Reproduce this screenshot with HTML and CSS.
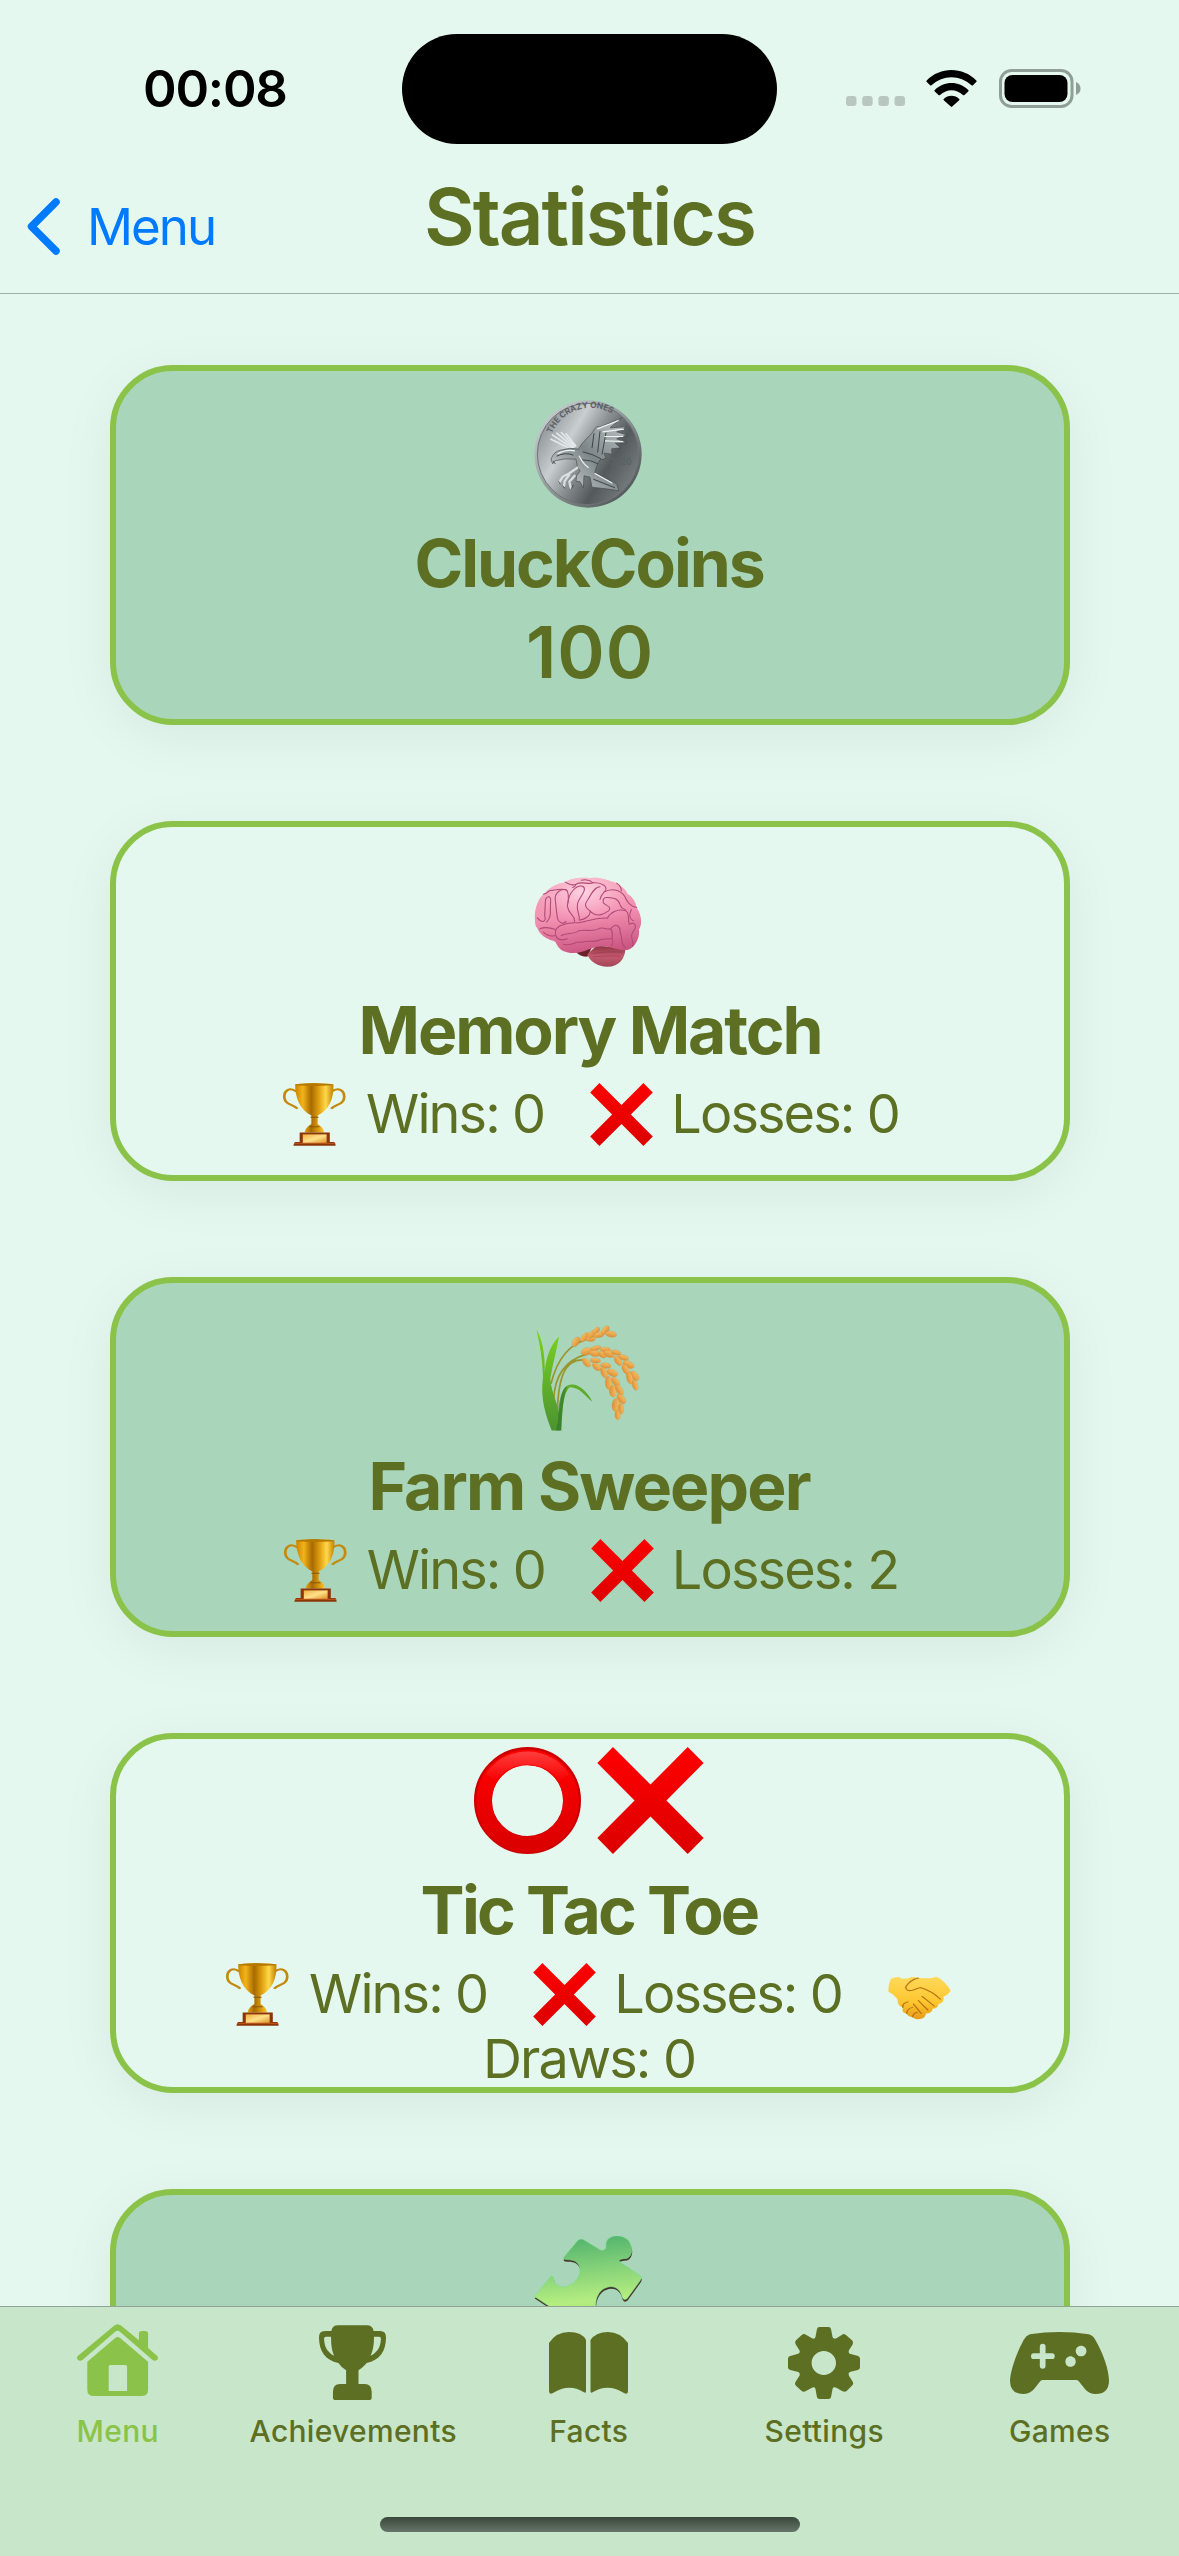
FILE: index.html
```
<!DOCTYPE html>
<html lang="en">
<head>
<meta charset="utf-8">
<title>Statistics</title>
<link rel="stylesheet" href="styles.css">
</head>
<body>
<svg class="defs" width="0" height="0" aria-hidden="true">
  <defs>
    <linearGradient id="red" x1="0" y1="0" x2="0" y2="1"><stop offset="0" stop-color="#ff0000"/><stop offset="1" stop-color="#dc0000"/></linearGradient>
    <linearGradient id="gold" x1="0" y1="0" x2="1" y2="0"><stop offset="0" stop-color="#c98500"/><stop offset=".2" stop-color="#f3b31a"/><stop offset=".42" stop-color="#a86a00"/><stop offset=".62" stop-color="#e0a010"/><stop offset=".8" stop-color="#ffd84a"/><stop offset="1" stop-color="#c08000"/></linearGradient>
    <linearGradient id="plate" x1="0" y1="0" x2="1" y2="1"><stop offset="0" stop-color="#f0b040"/><stop offset=".5" stop-color="#ffe08a"/><stop offset="1" stop-color="#dd9425"/></linearGradient>
    <symbol id="cross" viewBox="470 52 320 322">
      <path fill="url(#red)" d="M517 52 630 165 742 52 790 100 678 213 790 326 742 374 630 261 517 374 470 326 582 213 470 100Z"/>
    </symbol>
    <symbol id="trophy" viewBox="54 308 140 190" preserveAspectRatio="none">
      <path fill="none" stroke="#c48a0c" stroke-width="6" d="M84 334C68 318 56 332 57 352C59 376 78 372 86 386M162 334C178 318 191 332 190 352C188 376 169 372 161 386"/>
      <path fill="url(#gold)" d="M81 312Q123 306 166 312C167 350 160 386 131 406V432Q145 444 145 457H102Q103 444 117 432V406C90 388 81 350 81 312Z"/>
      <ellipse cx="123.500" cy="313" rx="42" ry="4" fill="#b67900"/>
      <path stroke="#8b5600" stroke-width="3" d="M115 411H133M113 440H135"/>
      <path fill="#8c3508" d="M91 457H158V486H168Q171 490 171 497H77Q78 489 81 486H91Z"/>
      <path fill="url(#plate)" d="M98 463H151V489H98Z"/>
      <path fill="#b4521a" d="M79 488H169L170 492H78Z"/>
    </symbol>
  </defs>
</svg>

<div class="screen">
  <header class="header">
    <div class="status">
      <span class="time">00:08</span>
      <span class="island"></span>
      <div class="signals">
        <svg class="cell" viewBox="0 0 59 10"><g fill="#b8c8c0"><rect width="10.500" height="10" rx="3"/><rect x="16.200" width="10.500" height="10" rx="3"/><rect x="32.400" width="10.500" height="10" rx="3"/><rect x="48.500" width="10.500" height="10" rx="3"/></g></svg>
        <svg class="wifi" viewBox="0 0 51 37"><path d="M.7 10.500C14-3.500 37-3.500 50.300 10.500Q51 11.300 50.200 12L47 15.300Q46.300 15.900 45.500 15.300C34 4.500 17 4.500 5.500 15.300Q4.700 15.900 4 15.300L.8 12Q0 11.300.7 10.500ZM8.800 20C18 10.700 33 10.700 42.200 20Q43 20.700 42.200 21.400L38.500 25Q37.800 25.700 37 25C30 18.600 21 18.600 14 25Q13.200 25.700 12.500 25L8.800 21.400Q8 20.700 8.800 20ZM17.800 28.900C22 24.600 29 24.600 33.200 28.900Q33.900 29.600 33.200 30.300L26.200 36.600Q25.500 37.200 24.800 36.600L17.800 30.300Q17.100 29.600 17.800 28.900Z"/></svg>
        <svg class="battery" viewBox="0 0 82 39"><rect x="1.500" y="1.500" width="71.500" height="36" rx="11" fill="none" stroke="#8f9f97" stroke-width="3"/><rect x="5.500" y="6" width="63" height="27" rx="8"/><path fill="#8f9f97" d="M77 13Q81.500 15 81.500 19.500T77 26Z"/></svg>
      </div>
    </div>
    <nav class="nav">
      <a class="back"><svg class="chevron" viewBox="0 0 33 57"><path fill="none" stroke="#007aff" stroke-width="7.500" stroke-linecap="round" stroke-linejoin="round" d="M29 4 4.500 28.500 29 53"/></svg><span>Menu</span></a>
      <h1 class="title">Statistics</h1>
    </nav>
  </header>

  <main class="list">
    <section class="card tinted coins">
      <svg class="emoji" viewBox="102 61 324 323">
        <defs>
          <linearGradient id="silver" x1="0" y1=".2" x2="1" y2=".8"><stop offset="0" stop-color="#848a8d"/><stop offset=".3" stop-color="#c9ced1"/><stop offset=".48" stop-color="#8c9294"/><stop offset=".7" stop-color="#54595b"/><stop offset="1" stop-color="#7d8486"/></linearGradient>
          <linearGradient id="rim" x1="0" y1="0" x2="1" y2="1"><stop offset="0" stop-color="#d5dadd"/><stop offset=".5" stop-color="#8f9698"/><stop offset="1" stop-color="#3f4446"/></linearGradient>
          <linearGradient id="wing" x1="1" y1="0" x2="0" y2="1"><stop offset="0" stop-color="#c2c8ca"/><stop offset=".5" stop-color="#7e8588"/><stop offset="1" stop-color="#dce1e3"/></linearGradient>
          <path id="legend" d="M155 162A126 126 0 0 1 362 122"/>
        </defs>
        <circle cx="264" cy="222.500" r="161" fill="url(#rim)"/>
        <circle cx="264" cy="222.500" r="152" fill="url(#silver)" stroke="#6d7477" stroke-width="3"/>
        <text class="coin-text" font-size="25"><textPath href="#legend" textLength="216">THE CRAZY ONES</textPath></text>
        <text class="coin-text" x="331" y="257" font-size="25" textLength="64">2020</text>
        <g stroke="#e2e7e9" stroke-width="5" stroke-linecap="round"><path d="M214 208 153 178M218 205 157 165M221 202 170 160M224 200 184 158M227 198 198 162"/></g>
        <path fill="url(#wing)" stroke="#434a4d" stroke-width="2" d="M236 208C248 182 276 166 284 147Q290 136 300 142L365 114 330 144 381 141 350 156 380 165 350 177 380 189 346 190 361 204 335 207 336 223 312 220 318 236 300 240 294 250Q288 262 284 278L350 312 357 333Q318 326 276 322L270 292 252 288 250 324 240 306 228 304Q226 286 240 274Q230 262 228 238L196 237 164 243 158 252 153 238Q162 214 182 211Q210 202 236 208Z"/>
        <path fill="none" stroke="#3e4548" stroke-width="3" d="M170 229Q196 216 220 226M282 160 276 205M300 154 293 218M318 158 306 224M248 216Q278 222 303 237M246 240Q274 240 294 252M280 298 345 324"/>
        <path fill="none" stroke="#f0f3f4" stroke-width="3.500" d="M292 147 356 122M308 156 372 148M313 170 370 170M315 183 370 185M173 222Q196 208 225 213M237 228Q250 254 266 264M284 280 337 310"/>
        <path fill="none" stroke="#d9dee0" stroke-width="7" stroke-linecap="round" stroke-linejoin="round" d="M232 264 208 280 188 291 178 307M208 285 194 304 192 318M224 288 208 306 212 324"/>
        <path fill="none" stroke="#373e41" stroke-width="2.500" stroke-linecap="round" d="M180 312 176 305M194 325 188 318M214 326 220 316M166 252 160 244"/>
      </svg>
      <h2 class="name">CluckCoins</h2>
      <p class="amount">100</p>
    </section>

    <section class="card">
      <svg class="emoji" viewBox="102 56 324 323">
        <defs>
          <linearGradient id="pink" x1=".4" y1="0" x2=".6" y2="1"><stop offset="0" stop-color="#f5a9bf"/><stop offset=".5" stop-color="#f28fb0"/><stop offset="1" stop-color="#c9537f"/></linearGradient>
          <radialGradient id="sheen" cx=".46" cy=".22" r=".45"><stop offset="0" stop-color="#ffd9e6" stop-opacity=".9"/><stop offset="1" stop-color="#ffc0d6" stop-opacity="0"/></radialGradient>
          <linearGradient id="stem" x1="0" y1="0" x2="0" y2="1"><stop offset="0" stop-color="#8c3440"/><stop offset=".5" stop-color="#c35a6c"/><stop offset="1" stop-color="#a34658"/></linearGradient>
        </defs>
        <path fill="#6b2129" d="M226 305 275 295 262 322Q240 322 226 305Z"/>
        <path fill="url(#stem)" d="M262 314 290 288 376 296C376 326 358 351 322 352C294 350 270 338 262 314Z"/>
        <path fill="url(#pink)" d="M105 215C102 180 112 148 136 129C150 112 176 100 196 98C214 84 248 84 270 86C300 82 322 92 350 101C372 112 380 126 384 134C400 144 408 160 410 174C424 194 428 224 417 240C420 262 408 292 385 301C362 306 334 292 318 291C288 288 270 300 246 307C214 316 180 308 170 284Q168 276 160 274C136 268 118 254 113 238Q104 228 105 215Z"/>
        <path fill="url(#sheen)" d="M105 215C102 180 112 148 136 129C150 112 176 100 196 98C214 84 248 84 270 86C300 82 322 92 350 101C372 112 380 126 384 134C400 144 408 160 410 174C424 194 428 224 417 240L170 284Z"/>
        <g fill="none" stroke="#b04a75" stroke-width="3.200" stroke-linecap="round" stroke-linejoin="round">
          <path d="M170 264C158 240 176 228 190 226C210 216 232 222 244 218C270 212 300 204 322 206C330 190 352 176 378 184C390 192 382 212 388 224M170 264Q182 276 202 268"/>
          <path d="M112 205C126 222 140 218 134 198L136 158C136 140 154 134 152 156C148 184 158 198 140 218M172 206C176 220 188 226 198 216M172 206 166 154C162 128 184 116 200 122C210 136 204 154 202 170C206 198 226 196 224 216"/>
          <path d="M204 160C206 130 228 106 248 110C264 118 240 142 234 158C226 180 240 194 238 212C254 210 272 200 270 184C258 176 250 168 264 150C276 128 286 112 300 112M270 184C292 208 314 192 326 184C338 172 316 168 310 160C304 138 330 144 346 148C366 156 354 176 376 180"/>
          <path d="M130 134Q140 132 148 124C174 120 190 116 200 122M196 98C208 106 222 108 228 104C246 94 262 106 280 100C270 92 254 90 244 92M228 104Q226 112 218 114M280 100C304 98 330 112 312 128Q302 140 300 150M312 128C330 116 360 118 374 140C382 158 390 170 410 174M350 101Q364 110 364 124"/>
          <path d="M184 258C204 248 220 256 236 244C256 238 278 250 300 236C316 234 322 242 332 238M190 284C214 292 224 274 246 278C266 270 284 282 302 270C316 266 326 272 336 266M332 238C350 214 362 236 360 248C370 268 360 284 376 294M332 238Q340 250 336 266Q342 280 334 288M388 224C410 214 410 236 398 248C388 266 404 278 398 290M120 238Q138 230 166 240M130 248Q148 264 164 258M394 180Q382 206 400 214"/>
        </g>
        <path fill="none" stroke="#8e2c4c" stroke-width="2.500" d="M278 312Q312 306 366 308M278 322Q318 318 362 320" opacity=".5"/>
      </svg>
      <h2 class="name">Memory Match</h2>
      <p class="stats"><svg class="mini cup"><use href="#trophy"/></svg><span class="wins">Wins: 0</span><svg class="mini"><use href="#cross"/></svg><span class="losses">Losses: 0</span></p>
    </section>

    <section class="card tinted farm">
      <svg class="emoji" viewBox="104 71 324 323">
        <defs>
          <linearGradient id="leaf" x1="0" y1="0" x2="0" y2="1"><stop offset="0" stop-color="#7ad31e"/><stop offset="1" stop-color="#4b9332"/></linearGradient>
          <linearGradient id="grain" x1="0" y1="0" x2="0" y2="1"><stop offset="0" stop-color="#f6bd62"/><stop offset="1" stop-color="#dc9038"/></linearGradient>
        </defs>
        <g fill="none" stroke="#98962c" stroke-width="5"><path d="M155 250C172 180 205 130 270 114M163 300C165 230 195 180 262 161M174 330C178 230 196 176 252 178"/></g>
        <path fill="url(#leaf)" d="M111 87C128 112 138 160 136 220C138 180 150 136 179 108C172 150 160 190 153 234C156 280 178 310 177 340C184 300 186 266 203 256C232 242 262 270 279 304C258 286 238 258 211 260C190 280 190 330 186 390H157C140 344 122 296 131 230C130 180 122 132 111 87Z"/>
        <path fill="#2f7429" opacity=".6" d="M177 330C180 290 190 262 203 257C195 280 188 320 185 390H170Q178 360 177 330Z"/>
        <g fill="url(#grain)" stroke="#c98434" stroke-width=".8">
          <ellipse cx="230" cy="124" rx="16" ry="10" transform="rotate(-58 230 124)"/><ellipse cx="256" cy="110" rx="16" ry="9" transform="rotate(-52 256 110)"/><ellipse cx="274" cy="115" rx="14" ry="8"/><ellipse cx="278" cy="101" rx="15" ry="9" transform="rotate(-40 278 101)"/><ellipse cx="291" cy="90" rx="12" ry="7" transform="rotate(-45 291 90)"/><ellipse cx="299" cy="103" rx="15" ry="8" transform="rotate(-10 299 103)"/><ellipse cx="318" cy="89" rx="15" ry="9" transform="rotate(-50 318 89)"/><ellipse cx="335" cy="101" rx="17" ry="9" transform="rotate(10 335 101)"/>
          <ellipse cx="262" cy="153" rx="17" ry="11" transform="rotate(-15 262 153)"/><ellipse cx="290" cy="143" rx="15" ry="7" transform="rotate(-15 290 143)"/><ellipse cx="286" cy="159" rx="16" ry="9" transform="rotate(10 286 159)"/><ellipse cx="318" cy="147" rx="15" ry="7"/><ellipse cx="309" cy="162" rx="13" ry="9" transform="rotate(30 309 162)"/><ellipse cx="329" cy="160" rx="17" ry="10" transform="rotate(20 329 160)"/><ellipse cx="350" cy="156" rx="15" ry="7" transform="rotate(15 350 156)"/><ellipse cx="356" cy="181" rx="16" ry="9" transform="rotate(55 356 181)"/><ellipse cx="372" cy="171" rx="16" ry="8" transform="rotate(15 372 171)"/><ellipse cx="388" cy="192" rx="18" ry="10" transform="rotate(25 388 192)"/><ellipse cx="379" cy="207" rx="17" ry="9" transform="rotate(60 379 207)"/><ellipse cx="406" cy="226" rx="17" ry="10" transform="rotate(48 406 226)"/><ellipse cx="391" cy="233" rx="18" ry="9" transform="rotate(75 391 233)"/><ellipse cx="407" cy="254" rx="16" ry="8" transform="rotate(75 407 254)"/>
          <ellipse cx="261" cy="186" rx="16" ry="9" transform="rotate(48 261 186)"/><ellipse cx="288" cy="180" rx="16" ry="7" transform="rotate(5 288 180)"/><ellipse cx="292" cy="199" rx="15" ry="9" transform="rotate(40 292 199)"/><ellipse cx="319" cy="195" rx="16" ry="8" transform="rotate(10 319 195)"/><ellipse cx="314" cy="216" rx="17" ry="9" transform="rotate(70 314 216)"/><ellipse cx="339" cy="217" rx="17" ry="10" transform="rotate(25 339 217)"/><ellipse cx="328" cy="247" rx="20" ry="10" transform="rotate(88 328 247)"/><ellipse cx="349" cy="244" rx="16" ry="9" transform="rotate(50 349 244)"/><ellipse cx="341" cy="272" rx="18" ry="11" transform="rotate(88 341 272)"/><ellipse cx="360" cy="268" rx="18" ry="9" transform="rotate(60 360 268)"/><ellipse cx="366" cy="295" rx="17" ry="10" transform="rotate(50 366 295)"/><ellipse cx="349" cy="313" rx="20" ry="11" transform="rotate(95 349 313)"/><ellipse cx="365" cy="325" rx="16" ry="8" transform="rotate(85 365 325)"/><ellipse cx="355" cy="344" rx="13" ry="8" transform="rotate(85 355 344)"/>
        </g>
      </svg>
      <h2 class="name">Farm Sweeper</h2>
      <p class="stats"><svg class="mini cup"><use href="#trophy"/></svg><span class="wins">Wins: 0</span><svg class="mini"><use href="#cross"/></svg><span class="losses">Losses: 2</span></p>
    </section>

    <section class="card tictac">
      <div class="pair">
        <svg class="emoji ring" viewBox="0 0 107 107">
          <defs><linearGradient id="shine" x1="0" y1="0" x2="0" y2="1"><stop offset="0" stop-color="#ff4d4d"/><stop offset="1" stop-color="#f80000"/></linearGradient></defs>
          <circle cx="53.500" cy="53.500" r="44.500" fill="none" stroke="#cc0000" stroke-width="18"/>
          <circle cx="53.500" cy="54" r="43.500" fill="none" stroke="url(#red)" stroke-width="15.500"/>
          <path fill="url(#shine)" d="M12 27C30-3 77-3 95 27L86 34C69 12 38 12 21 34Z" opacity=".8"/>
        </svg>
        <svg class="emoji"><use href="#cross"/></svg>
      </div>
      <h2 class="name">Tic Tac Toe</h2>
      <p class="stats"><svg class="mini cup"><use href="#trophy"/></svg><span class="wins">Wins: 0</span><svg class="mini"><use href="#cross"/></svg><span class="losses">Losses: 0</span><svg class="mini hands" viewBox="1399 112 131 129" preserveAspectRatio="none">
        <defs><linearGradient id="skin" x1="0" y1="0" x2="0" y2="1"><stop offset="0" stop-color="#ffd95a"/><stop offset=".6" stop-color="#fdc62f"/><stop offset="1" stop-color="#e89a17"/></linearGradient></defs>
        <path fill="url(#skin)" d="M1405 120Q1414 116 1421 115Q1432 124 1442 118Q1451 112 1462 117Q1484 122 1500 114Q1518 126 1529 154Q1526 166 1514 173Q1518 188 1504 194Q1504 206 1492 208Q1490 222 1478 222Q1476 238 1465 238Q1456 242 1450 232Q1440 232 1438 222Q1426 220 1430 204Q1418 200 1419 182Q1414 168 1400 158Q1399 136 1405 120Z"/>
        <path fill="none" stroke="#b87412" stroke-width="3" stroke-linecap="round" d="M1462 118Q1444 124 1436 144Q1436 158 1450 154Q1462 148 1466 146Q1490 156 1508 180M1470 172 1495 200M1462 184 1482 212M1452 194 1468 222M1430 204Q1428 192 1440 188M1438 222Q1438 208 1450 204M1450 232Q1452 220 1460 218"/>
      </svg></p>
      <p class="draws">Draws: 0</p>
    </section>

    <section class="card tinted">
      <svg class="emoji" viewBox="1398 167 278 318" preserveAspectRatio="none">
        <defs><linearGradient id="jigsaw" x1=".4" y1="0" x2=".5" y2="1"><stop offset="0" stop-color="#4fb36c"/><stop offset=".3" stop-color="#7fce78"/><stop offset=".66" stop-color="#b5ee80"/><stop offset="1" stop-color="#8ccf60"/></linearGradient></defs>
        <g>
          <path fill="#44352a" transform="translate(1 6)" d="M1399 345 1440 287Q1448 279 1450 298C1456 318 1478 324 1500 304C1524 280 1522 240 1490 237Q1470 237 1474 230L1510 181Q1518 172 1526 178L1569 208Q1586 212 1583 192C1584 164 1622 158 1641 180C1656 204 1650 226 1637 233Q1612 234 1619 243L1672 284Q1677 290 1671 299L1638 351Q1628 360 1624 344C1618 314 1592 308 1572 327Q1556 344 1557 374L1580 420 1540 460 1440 376Z"/>
          <path fill="url(#jigsaw)" stroke="#7be090" stroke-width="1.500" d="M1399 345 1440 287Q1448 279 1450 298C1456 318 1478 324 1500 304C1524 280 1522 240 1490 237Q1470 237 1474 230L1510 181Q1518 172 1526 178L1569 208Q1586 212 1583 192C1584 164 1622 158 1641 180C1656 204 1650 226 1637 233Q1612 234 1619 243L1672 284Q1677 290 1671 299L1638 351Q1628 360 1624 344C1618 314 1592 308 1572 327Q1556 344 1557 374L1580 420 1540 460 1440 376Z"/>
        </g>
      </svg>
    </section>
  </main>

  <footer class="tabbar">
    <div class="tabs">
      <a class="tab active">
        <span class="icon"><svg class="home" viewBox="201 432 212 216" preserveAspectRatio="none"><path fill="#8bc34a" fill-rule="evenodd" d="M203 528 298 437Q307 428 317 437L363 481V461Q363 453 371 453H379Q387 453 387 461V504L411 528Q415 534 411 539Q404 545 398 539L314 456Q307 449 300 456L216 539Q209 545 203 539Q199 534 203 528ZM301 474Q307 468 314 474L387 545V630Q387 648 369 648H246Q228 648 228 630V545ZM288 555Q284 555 284 560V633H332V560Q332 555 327 555Z"/></svg></span>
        <span class="label">Menu</span>
      </a>
      <a class="tab">
        <span class="icon"><svg class="award" viewBox="834 435 173 225" preserveAspectRatio="none"><path fill="#5c6f23" fill-rule="evenodd" d="M866 453Q868 436 883 436H957Q973 436 975 453H992Q1007 453 1007 472C1007 515 990 541 957 549Q952 558 936 571V612H952Q970 612 970 635V653Q970 660 963 660H877Q870 660 870 653V635Q870 612 888 612H904V571Q890 560 884 549C851 541 834 515 834 472Q834 453 849 453ZM865 470H852Q847 470 847 476C848 501 856 517 873 527Q865 508 865 470ZM976 470Q976 508 967 527C985 517 993 501 994 476Q994 470 989 470Z"/></svg></span>
        <span class="label">Achievements</span>
      </a>
      <a class="tab">
        <span class="icon"><svg class="book" viewBox="0 0 79 62" preserveAspectRatio="none"><path fill="#5c6f23" d="M0 11Q7 0 20 0T37 8V59Q37 62 34.500 60Q20 51 4 61Q0 63 0 59ZM41.500 8Q47 0 59 0T79 11V59Q79 63 75 61Q59 51 44 60Q41.500 62 41.500 59Z"/></svg></span>
        <span class="label">Facts</span>
      </a>
      <a class="tab">
        <span class="icon"><svg class="gear" viewBox="544 441 189 216" preserveAspectRatio="none"><path fill="#5c6f23" fill-rule="evenodd" d="M620 448Q621 441 627 441H650Q656 441 657 448L661 472Q664 478 671 475L686 464Q691 460 696 465L712 481Q717 487 714 493L704 511Q701 518 706 521L726 527Q733 529 733 536V562Q733 568 727 570L706 576Q701 580 704 587L714 605Q717 611 713 616L698 633Q692 638 686 633L671 623Q663 620 661 626L657 651Q656 657 650 657H627Q621 657 620 651L616 626Q614 620 607 623L591 633Q586 638 580 633L565 617Q560 611 564 605L574 587Q577 580 571 576L550 570Q544 568 544 562V536Q544 529 550 528L571 521Q577 518 574 511L564 493Q560 487 565 481L580 465Q586 460 591 464L607 475Q614 478 616 472ZM638 513C621 513 606 529 606 549S621 585 638 585S670 569 670 549S655 513 638 513Z"/></svg></span>
        <span class="label">Settings</span>
      </a>
      <a class="tab">
        <span class="icon"><svg class="pad" viewBox="1126 456 259 186" preserveAspectRatio="none"><path fill="#5c6f23" fill-rule="evenodd" d="M1162 479Q1168 467 1178 463Q1255 449 1332 463Q1342 466 1349 479C1370 520 1385 570 1385 603Q1384 642 1350 642Q1333 642 1322 627L1306 604Q1303 600 1299 600H1212Q1208 600 1205 604L1189 627Q1178 642 1160 642Q1127 642 1126 603C1127 570 1145 515 1162 479ZM1204 520H1188Q1181 520 1181 528.500T1188 537H1204V557Q1204 566 1211.500 566T1219 557V537H1236Q1243 537 1243 528.500T1236 520H1219V500Q1219 491 1211.500 491T1204 500ZM1312 497C1304 497 1298 504 1298 513S1304 529 1312 529S1326 522 1326 513S1320 497 1312 497ZM1284 529C1277 529 1271 536 1271 545S1277 560 1284 560S1298 554 1298 545S1292 529 1284 529Z"/></svg></span>
        <span class="label">Games</span>
      </a>
    </div>
    <div class="home-indicator"></div>
  </footer>
</div>
</body>
</html>
```
FILE: styles.css
```
* { box-sizing: border-box; margin: 0; padding: 0; }
body {
  width: 1179px;
  height: 2556px;
  overflow: hidden;
  background: #e4f8ef;
  color: #5c6f23;
  font-family: Inter, Roboto, sans-serif;
}
.defs { position: absolute; }
svg { display: block; flex: none; }

.screen { display: flex; flex-direction: column; height: 2556px; }

/* Status bar and navigation */
.header { height: 294px; border-bottom: 1px solid #9fb0a8; flex: none; }
.status { display: grid; grid-template-columns: 402px 375px 402px; align-items: center; height: 177px; }
.time { padding-left: 143px; color: #000; font-size: 51px; font-weight: 600; letter-spacing: -1.22px; }
.island { height: 110px; border-radius: 55px; background: #000; }
.signals { display: flex; align-items: center; padding-left: 69px; }
.cell { width: 59px; height: 10px; margin-top: 25px; }
.wifi { width: 51px; height: 37px; margin-left: 21px; }
.battery { width: 82px; height: 39px; margin-left: 22px; }

.nav { display: grid; grid-template-columns: 1fr auto 1fr; grid-template-rows: 99px; align-items: center; height: 116px; }
.back { display: flex; align-items: center; gap: 27px; padding-left: 27px; color: #007aff; font-size: 51px; letter-spacing: -1.98px; }
.chevron { width: 33px; height: 57px; }
.title { margin-bottom: 19px; font-size: 78px; font-weight: 600; line-height: 78px; letter-spacing: -1.96px; }

/* Cards */
.list { display: flex; flex-direction: column; align-items: center; gap: 96px; height: 2012px; padding: 71px 0 0 1px; overflow: hidden; flex: none; }
.card {
  display: flex;
  flex-direction: column;
  align-items: center;
  flex: none;
  width: 960px;
  height: 360px;
  padding-top: 41px;
  border: 6px solid #8bc34a;
  border-radius: 63px;
  background: #e4f8ef;
  box-shadow: 0 12px 56px rgba(0, 0, 0, .06);
}
.tinted { background: #a9d6bb; }
.emoji { width: 108px; height: 108px; margin-right: 4px; }
.name { margin-top: 14px; font-size: 66px; font-weight: 700; line-height: 80px; letter-spacing: -2.1px; }
.coins { padding-top: 29px; }
.coins .name { margin-top: 15px; padding-right: 2px; }
.farm .name { padding-right: 2px; letter-spacing: -1.9px; }
.amount { margin-top: 7px; font-size: 72px; font-weight: 600; line-height: 84px; letter-spacing: .9px; }
.coin-text { font-weight: 700; fill: #5b6265; }

.stats { display: flex; align-items: center; height: 64px; margin-top: 12px; font-size: 54px; line-height: 64px; letter-spacing: -1.9px; white-space: nowrap; }
.mini { width: 63px; height: 63px; }
.wins { margin: 0 46px 0 20px; }
.losses { margin-left: 18px; }
.cup { margin-left: 2px; }
.tictac { padding-top: 8px; }
.pair { display: flex; gap: 16px; margin-right: 2px; }
.pair .emoji { width: 107px; height: 107px; margin-right: 0; }
.tictac .name { margin-top: 16px; padding-right: 2px; letter-spacing: -2.75px; }
.tictac .stats { margin-top: 12px; padding-right: 5px; }
.hands { height: 44px; margin: 8px 0 0 46px; }
.draws { padding-right: 2px; font-size: 54px; line-height: 66px; letter-spacing: -1.87px; }

/* Tab bar */
.tabbar { display: flex; flex-direction: column; align-items: center; justify-content: space-between; height: 250px; padding-bottom: 24px; border-top: 1px solid #8fa496; background: #c8e6c9; }
.tabs { display: grid; grid-template-columns: repeat(5, 235.5px); width: 1179px; padding-top: 17px; }
.tab { display: flex; flex-direction: column; align-items: center; gap: 13px; }
.icon { display: flex; align-items: center; height: 76px; }
.label { font-size: 30px; font-weight: 500; line-height: 36px; letter-spacing: .3px; }
.active { color: #8bc34a; }
.home { width: 81px; height: 72px; margin-bottom: 4px; }
.award { width: 67px; height: 75px; margin-right: 2px; }
.book { width: 79px; height: 62px; margin-top: 2px; }
.gear { width: 72px; height: 72px; margin-top: 2px; }
.pad { width: 99px; height: 62px; margin-top: 2px; }
.home-indicator { width: 420px; height: 15px; border-radius: 8px; background: linear-gradient(#3a473b, #66756a); }
```
